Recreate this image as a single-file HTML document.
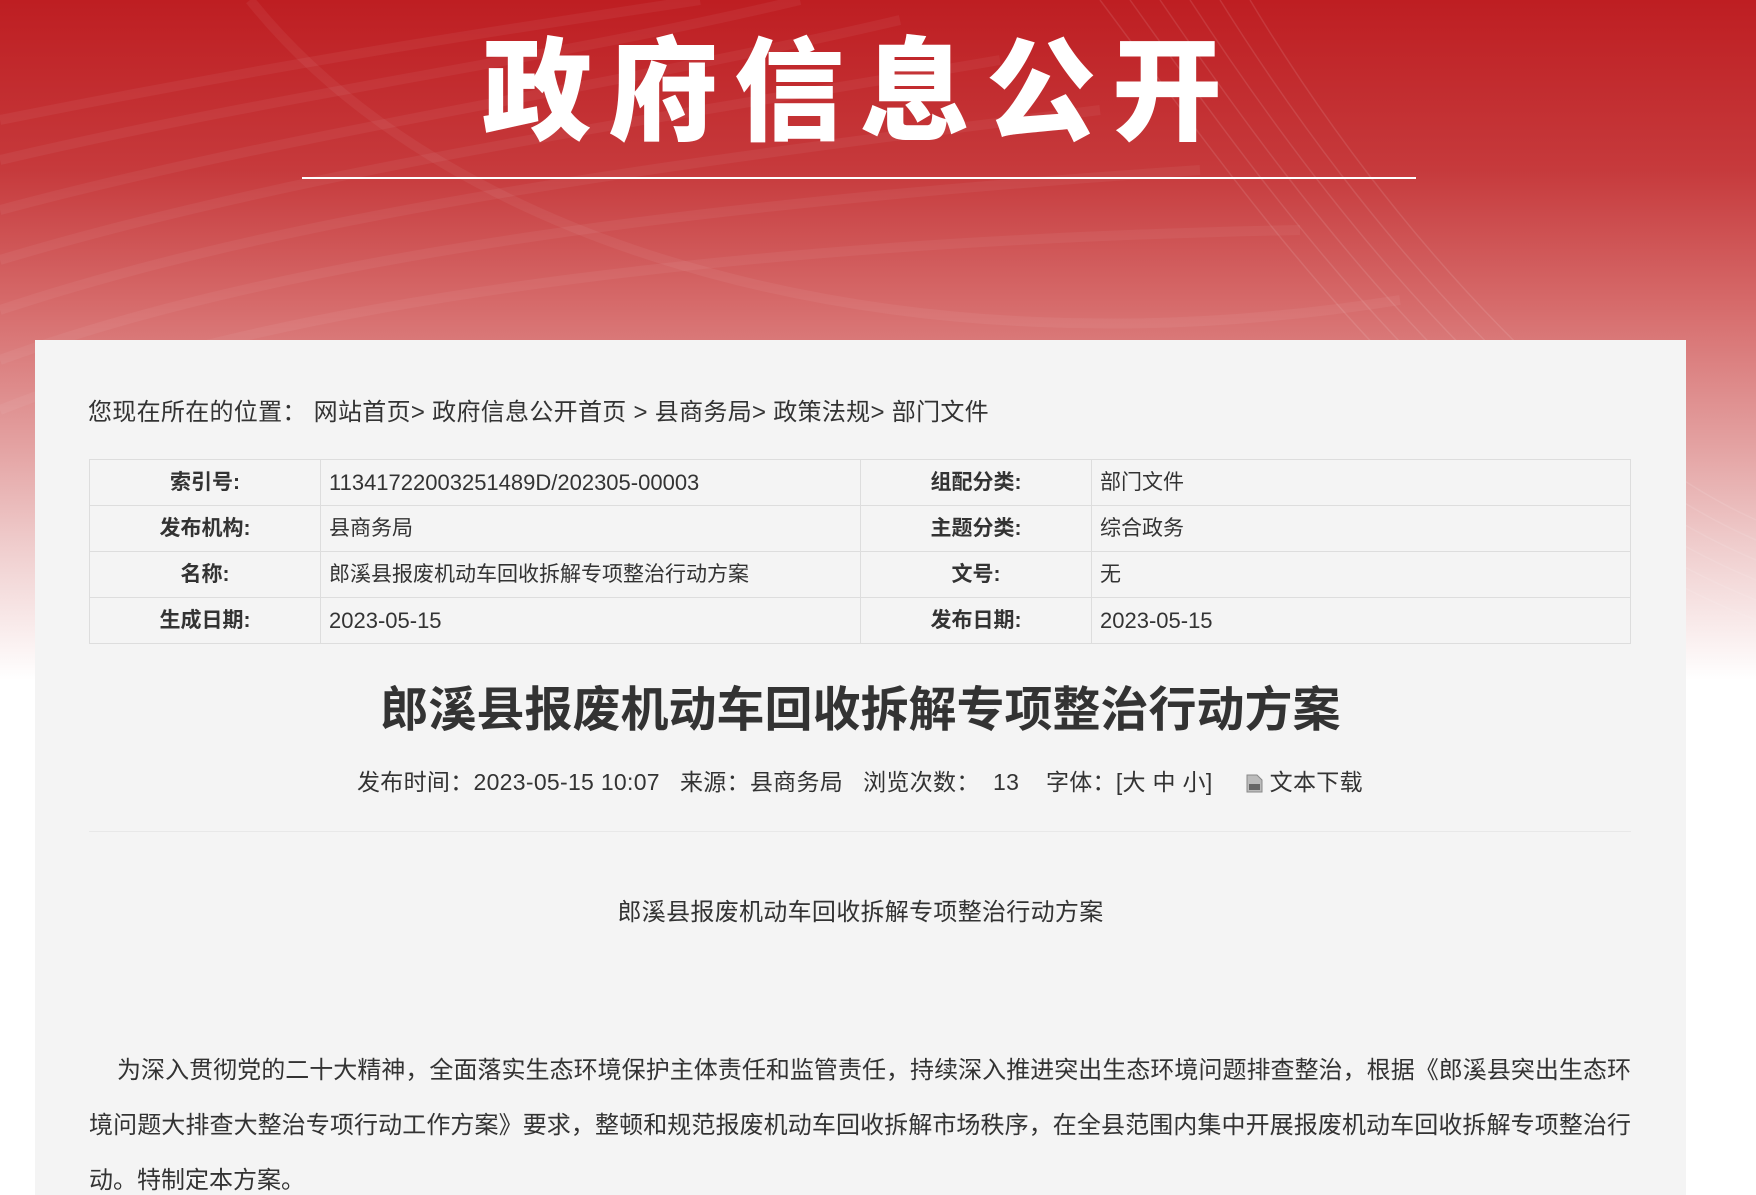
<!DOCTYPE html>
<html><head><meta charset="utf-8">
<style>
*{margin:0;padding:0;box-sizing:border-box}
html,body{width:1756px;height:1195px;overflow:hidden;background:#fff}
body{font-family:"Liberation Sans","Noto Sans CJK SC",sans-serif;color:#333;position:relative}
.bg{position:absolute;left:0;top:0;width:1756px;height:680px;background:linear-gradient(180deg,#be1e22 0%,#c63a3c 25%,#d66b6b 45%,#e3a0a0 65%,#efcccc 80%,#fff 100%)}
.bg svg{position:absolute;left:0;top:0}
.t{position:absolute;left:470px;top:12px;width:780px;text-align:center;color:#fff;font-family:"Noto Sans CJK SC",sans-serif;font-weight:900;font-size:110px;letter-spacing:16px;line-height:140px;transform:scaleY(1.02);white-space:nowrap}
.line{position:absolute;left:302px;top:177px;width:1114px;height:2px;background:#fff}
.panel{position:absolute;left:35px;top:340px;width:1651px;height:900px;background:#f4f4f4}
.crumb{position:absolute;left:88px;top:396px;font-size:24px;line-height:34px;color:#333;white-space:nowrap;letter-spacing:0.3px}
table{position:absolute;left:89px;top:459px;width:1542px;border-collapse:collapse;font-size:21px}
td{border:1px solid #ddd;height:46px;padding:0 8px;color:#333;line-height:44px}
td.k{font-weight:bold;text-align:center;width:231px}
td.v{width:540px}
.n{font-size:22px}
.h1{position:absolute;left:35px;width:1651px;top:680px;text-align:center;font-size:48px;font-weight:bold;color:#333;line-height:62px}
.meta{position:absolute;left:357px;top:765px;font-size:23px;line-height:34px;white-space:nowrap;color:#333;letter-spacing:0.3px}
.meta svg{vertical-align:-3px}
.hr{position:absolute;left:89px;top:831px;width:1542px;height:1px;background:#e8e8e8}
.sub{position:absolute;left:35px;width:1651px;top:896px;text-align:center;font-size:24px;line-height:34px;letter-spacing:0.3px}
.p{position:absolute;left:89px;top:1043px;width:1542px;font-size:24px;line-height:55px;text-align:justify;text-indent:28px}
</style></head><body>
<div class="bg">
<svg width="1756" height="680" viewBox="0 0 1756 680">
<g fill="none" stroke="#fff" stroke-opacity="0.05" stroke-width="10">
<path d="M0 120 C300 60 500 30 700 0"/>
<path d="M0 160 C300 90 550 60 800 0"/>
<path d="M0 210 C300 130 600 90 900 20"/>
<path d="M0 260 C300 170 650 120 1000 60"/>
<path d="M0 310 C300 210 700 160 1100 110"/>
<path d="M0 360 C300 250 750 200 1200 170"/>
<path d="M0 410 C300 290 800 240 1300 230"/>
<path d="M250 0 C450 250 900 380 1400 300"/>
</g>
<g fill="none" stroke="#fff" stroke-opacity="0.1" stroke-width="1.5">
<path d="M1100 0 C1250 200 1450 500 1756 620"/>
<path d="M1130 0 C1280 210 1480 490 1756 600"/>
<path d="M1160 0 C1310 220 1510 480 1756 580"/>
<path d="M1190 0 C1340 230 1540 470 1756 560"/>
<path d="M1220 0 C1370 240 1570 460 1756 540"/>
<path d="M1250 0 C1400 250 1600 450 1756 520"/>
</g></svg>
</div>
<div class="t">政府信息公开</div>
<div class="line"></div>
<div class="panel"></div>
<div class="crumb">您现在所在的位置：&nbsp;网站首页&gt; 政府信息公开首页 &gt; 县商务局&gt; 政策法规&gt; 部门文件</div>
<table>
<tr><td class="k">索引号:</td><td class="v n">11341722003251489D/202305-00003</td><td class="k">组配分类:</td><td>部门文件</td></tr>
<tr><td class="k">发布机构:</td><td class="v">县商务局</td><td class="k">主题分类:</td><td>综合政务</td></tr>
<tr><td class="k">名称:</td><td class="v">郎溪县报废机动车回收拆解专项整治行动方案</td><td class="k">文号:</td><td>无</td></tr>
<tr><td class="k">生成日期:</td><td class="v n">2023-05-15</td><td class="k">发布日期:</td><td class="n">2023-05-15</td></tr>
</table>
<div class="h1">郎溪县报废机动车回收拆解专项整治行动方案</div>
<div class="meta">发布时间：2023-05-15 10:07&nbsp;&nbsp;&nbsp;来源：县商务局&nbsp;&nbsp;&nbsp;浏览次数：&nbsp;&nbsp;13&nbsp;&nbsp;&nbsp;&nbsp;字体：[大 中 小]&nbsp;&nbsp;&nbsp;&nbsp;&nbsp;<svg width="17" height="19" viewBox="0 0 17 19"><path d="M1 1h10l5 5v12H1z" fill="#bbb" stroke="#888"/><rect x="3" y="10" width="11" height="6" fill="#666"/></svg> 文本下载</div>
<div class="hr"></div>
<div class="sub">郎溪县报废机动车回收拆解专项整治行动方案</div>
<div class="p">为深入贯彻党的二十大精神，全面落实生态环境保护主体责任和监管责任，持续深入推进突出生态环境问题排查整治，根据《郎溪县突出生态环境问题大排查大整治专项行动工作方案》要求，整顿和规范报废机动车回收拆解市场秩序，在全县范围内集中开展报废机动车回收拆解专项整治行动。特制定本方案。</div>
</body></html>
